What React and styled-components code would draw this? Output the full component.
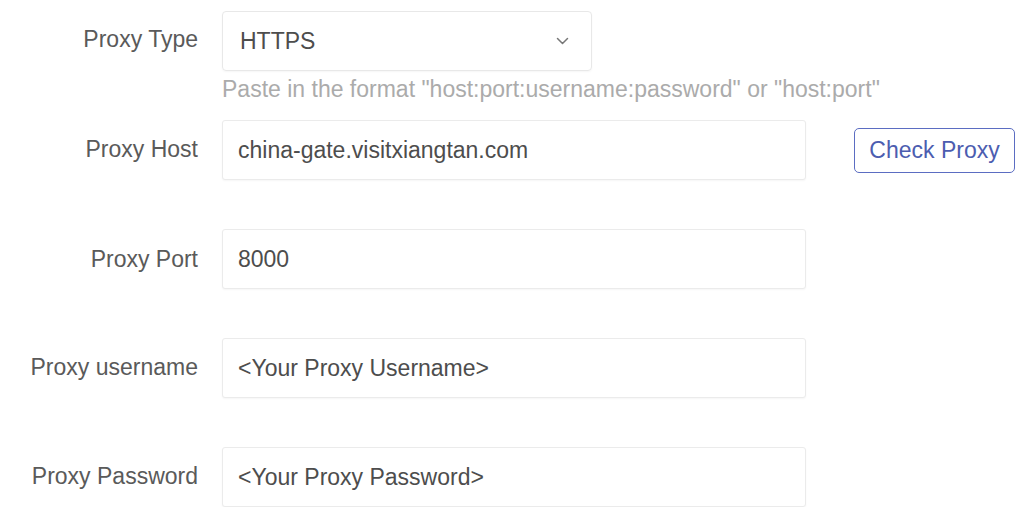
import React from 'react';
import styled, { createGlobalStyle } from 'styled-components';

const GlobalStyle = createGlobalStyle`
  body {
    margin: 0;
    background: #ffffff;
    font-family: "Liberation Sans", Arial, sans-serif;
  }
`;

const Form = styled.form`
  display: flex;
  flex-direction: column;
  padding-top: 11px;
`;

const Row = styled.div`
  display: grid;
  grid-template-columns: 198px 1fr;
  column-gap: 24px;
  height: 109px;

  &:last-child {
    height: 60px;
  }
`;

const Label = styled.label`
  height: 60px;
  display: flex;
  align-items: center;
  justify-content: flex-end;
  padding-bottom: ${p => p.lift || 0}px;
  box-sizing: border-box;
  font-size: 23px;
  color: #5a5a5a;
  white-space: nowrap;
`;

const Field = styled.div`
  display: flex;
  flex-direction: column;
`;

const Line = styled.div`
  display: flex;
  align-items: center;
  gap: 48px;
`;

const Input = styled.input`
  box-sizing: border-box;
  width: ${p => p.width || 584}px;
  height: 60px;
  padding: 0 15px;
  border: 1px solid #ebebeb;
  border-radius: 3px;
  box-shadow: 0 1px 2px rgba(0, 0, 0, 0.04);
  font: inherit;
  font-size: 23px;
  color: #4d4d4d;
  outline: none;
  background: #ffffff;
`;

const SelectBox = styled.div`
  box-sizing: border-box;
  width: 370px;
  height: 60px;
  padding: 0 22px 0 17px;
  border: 1px solid #e8e8e8;
  border-radius: 4px;
  box-shadow: 0 1px 2px rgba(0, 0, 0, 0.04);
  display: flex;
  align-items: center;
  justify-content: space-between;
  font-size: 23px;
  color: #4d4d4d;
`;

const Hint = styled.div`
  margin-top: 7px;
  font-size: 23px;
  line-height: 22px;
  color: #ababab;
  white-space: nowrap;
`;

const CheckButton = styled.button`
  box-sizing: border-box;
  width: 161px;
  height: 45px;
  border: 1.5px solid #5b6dc2;
  border-radius: 5px;
  background: #ffffff;
  font: inherit;
  font-size: 23px;
  color: #4c5db0;
  cursor: pointer;
`;

const Chevron = () => (
  <svg width="13" height="8" viewBox="0 0 13 8" fill="none">
    <path d="M1.5 1.5 L6.5 6.5 L11.5 1.5" stroke="#777" strokeWidth="1.5" strokeLinecap="round" strokeLinejoin="round" />
  </svg>
);

const fields = [
  { label: 'Proxy Host', value: 'china-gate.visitxiangtan.com', check: true, lift: 2 },
  { label: 'Proxy Port', value: '8000' },
  { label: 'Proxy username', value: '<Your Proxy Username>', lift: 2 },
  { label: 'Proxy Password', value: '<Your Proxy Password>', lift: 2 },
];

export default function App() {
  return (
    <>
      <GlobalStyle />
      <Form onSubmit={e => e.preventDefault()}>
        <Row>
          <Label lift={4}>Proxy Type</Label>
          <Field>
            <SelectBox>
              <span>HTTPS</span>
              <Chevron />
            </SelectBox>
            <Hint>Paste in the format "host:port:username:password" or "host:port"</Hint>
          </Field>
        </Row>
        {fields.map(f => (
          <Row key={f.label}>
            <Label lift={f.lift}>{f.label}</Label>
            <Field>
              <Line>
                <Input defaultValue={f.value} />
                {f.check && <CheckButton type="button">Check Proxy</CheckButton>}
              </Line>
            </Field>
          </Row>
        ))}
      </Form>
    </>
  );
}
